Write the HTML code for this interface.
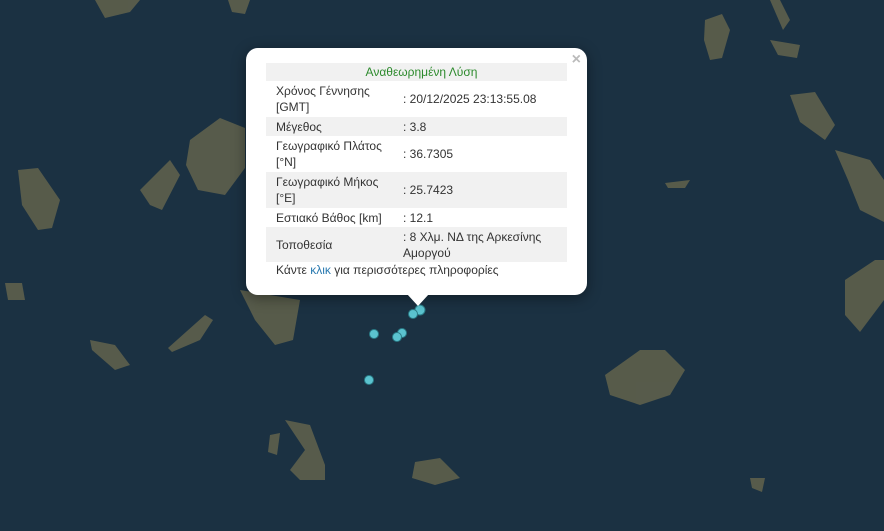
<!DOCTYPE html>
<html><head><meta charset="utf-8"><style>
html,body{margin:0;padding:0}
body{width:884px;height:531px;overflow:hidden;position:relative;background:#1b3142;font-family:"Liberation Sans",Arial,sans-serif}
svg.map{position:absolute;left:0;top:0}
.popup{position:absolute;left:246px;top:48px;width:341px;height:247px;background:#fff;border-radius:12px;box-shadow:0 3px 14px rgba(0,0,0,.4)}
.tip{position:absolute;left:407px;top:294px;width:0;height:0;border-left:11px solid transparent;border-right:11px solid transparent;border-top:12px solid #fff;z-index:2}
.close{position:absolute;right:6px;top:3px;color:#bbb;font-size:16px;font-weight:bold}
table{position:absolute;left:20px;top:15px;width:301px;border-collapse:collapse;font-size:12px;color:#333}
td{padding:0 0 0 10px;line-height:16px;vertical-align:middle}
td.v{padding-left:1px}
tr.g{background:#f1f1f1}
.hd{text-align:center;color:#2d8a2d;height:18px}
.foot{position:absolute;left:30px;top:215px;font-size:12px;color:#333}
.foot span{color:#2a7ab0}
</style></head><body>
<svg class="map" width="884" height="531" viewBox="0 0 884 531">
<g fill="#6c6a4e" opacity="0.75">
<path d="M95 0 L140 0 L130 12 L105 18 Z"/>
<path d="M228 0 L250 0 L245 14 L232 12 Z"/>
<path d="M705 20 L722 14 L730 30 L722 58 L710 60 L704 40 Z"/>
<path d="M770 0 L780 0 L790 20 L783 30 Z"/>
<path d="M770 40 L800 45 L797 58 L778 55 Z"/>
<path d="M790 95 L815 92 L835 125 L825 140 L800 122 Z"/>
<path d="M835 150 L870 160 L884 180 L884 222 L860 210 L848 180 Z"/>
<path d="M190 140 L220 118 L245 128 L245 168 L225 195 L198 190 L186 165 Z"/>
<path d="M18 170 L38 168 L60 200 L52 228 L38 230 L22 205 Z"/>
<path d="M140 190 L170 160 L180 175 L162 210 L150 205 Z"/>
<path d="M5 283 L22 283 L25 300 L8 300 Z"/>
<path d="M240 290 L300 300 L293 340 L275 345 L255 320 Z"/>
<path d="M168 348 L205 315 L213 320 L200 340 L172 352 Z"/>
<path d="M90 340 L115 345 L130 365 L115 370 L92 350 Z"/>
<path d="M640 350 L665 350 L685 370 L670 395 L640 405 L610 395 L605 375 Z"/>
<path d="M845 280 L875 260 L884 260 L884 300 L860 332 L845 315 Z"/>
<path d="M285 420 L310 425 L325 465 L325 480 L300 480 L290 470 L305 450 Z"/>
<path d="M270 435 L280 433 L277 455 L268 452 Z"/>
<path d="M415 462 L440 458 L460 478 L435 485 L412 478 Z"/>
<path d="M665 183 L690 180 L685 188 L668 188 Z"/>
<path d="M750 478 L765 478 L762 492 L752 488 Z"/>
</g>
<g fill="#5bc3cf" stroke="#2a7b86" stroke-width="1">
<circle cx="420" cy="310" r="5"/><circle cx="413" cy="314" r="4.5"/>
<circle cx="374" cy="334" r="4.5"/><circle cx="402" cy="333" r="4.5"/>
<circle cx="397" cy="337" r="4.5"/><circle cx="369" cy="380" r="4.5"/>
</g>
</svg>
<div class="tip"></div>
<div class="popup">
<div class="close">×</div>
<table>
<tr class="g"><td colspan="2" class="hd">Αναθεωρημένη Λύση</td></tr>
<tr style="height:36px"><td style="width:126px">Χρόνος Γέννησης<br>[GMT]</td><td class="v">: 20/12/2025 23:13:55.08</td></tr>
<tr class="g" style="height:19px"><td>Μέγεθος</td><td class="v">: 3.8</td></tr>
<tr style="height:36px"><td>Γεωγραφικό Πλάτος<br>[°N]</td><td class="v">: 36.7305</td></tr>
<tr class="g" style="height:36px"><td>Γεωγραφικό Μήκος<br>[°E]</td><td class="v">: 25.7423</td></tr>
<tr style="height:19px"><td>Εστιακό Βάθος [km]</td><td class="v">: 12.1</td></tr>
<tr class="g" style="height:35px"><td>Τοποθεσία</td><td class="v">: 8 Χλμ. ΝΔ της Αρκεσίνης<br>Αμοργού</td></tr>
</table>
<div class="foot">Κάντε <span>κλικ</span> για περισσότερες πληροφορίες</div>
</div>
</body></html>
